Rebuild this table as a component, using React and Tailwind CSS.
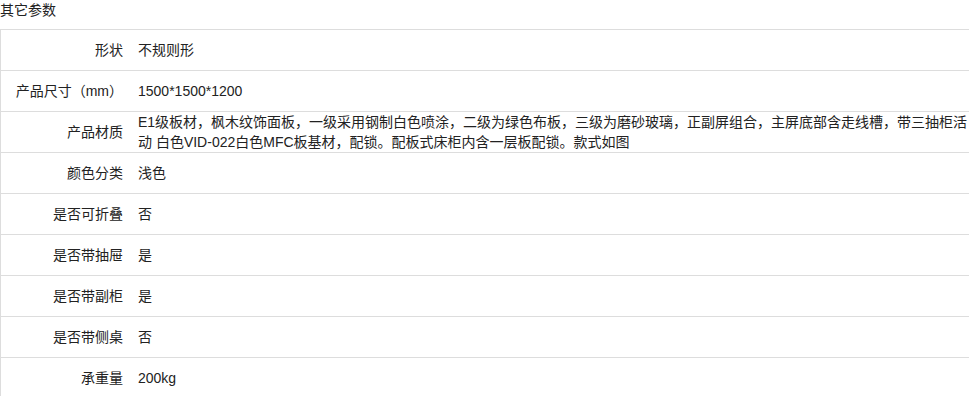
import React from "react";

const rows = [
  ["形状", "不规则形"],
  ["产品尺寸（mm）", "1500*1500*1200"],
  [
    "产品材质",
    "E1级板材，枫木纹饰面板，一级采用钢制白色喷涂，二级为绿色布板，三级为磨砂玻璃，正副屏组合，主屏底部含走线槽，带三抽柜活动 白色VID-022白色MFC板基材，配锁。配板式床柜内含一层板配锁。款式如图",
  ],
  ["颜色分类", "浅色"],
  ["是否可折叠", "否"],
  ["是否带抽屉", "是"],
  ["是否带副柜", "是"],
  ["是否带侧桌", "否"],
  ["承重量", "200kg"],
];

export default function App() {
  return (
    <div
      className="w-[969px] h-[396px] overflow-hidden bg-white text-[14px] leading-5 text-[#222]"
      style={{ fontFamily: '"Liberation Sans", "Noto Sans CJK SC", sans-serif' }}
    >
      <div className="h-5 mb-[9px]">其它参数</div>
      <div className="border-l border-[#dddddd]">
        {rows.map(([k, v]) => (
          <div key={k} className="flex border-t border-[#dddddd] min-h-[41px]">
            <div className="w-[122px] shrink-0 text-right flex items-center justify-end">{k}</div>
            <div className="flex-1 pl-[15px] flex items-center break-all">
              <span>{v}</span>
            </div>
          </div>
        ))}
      </div>
    </div>
  );
}
